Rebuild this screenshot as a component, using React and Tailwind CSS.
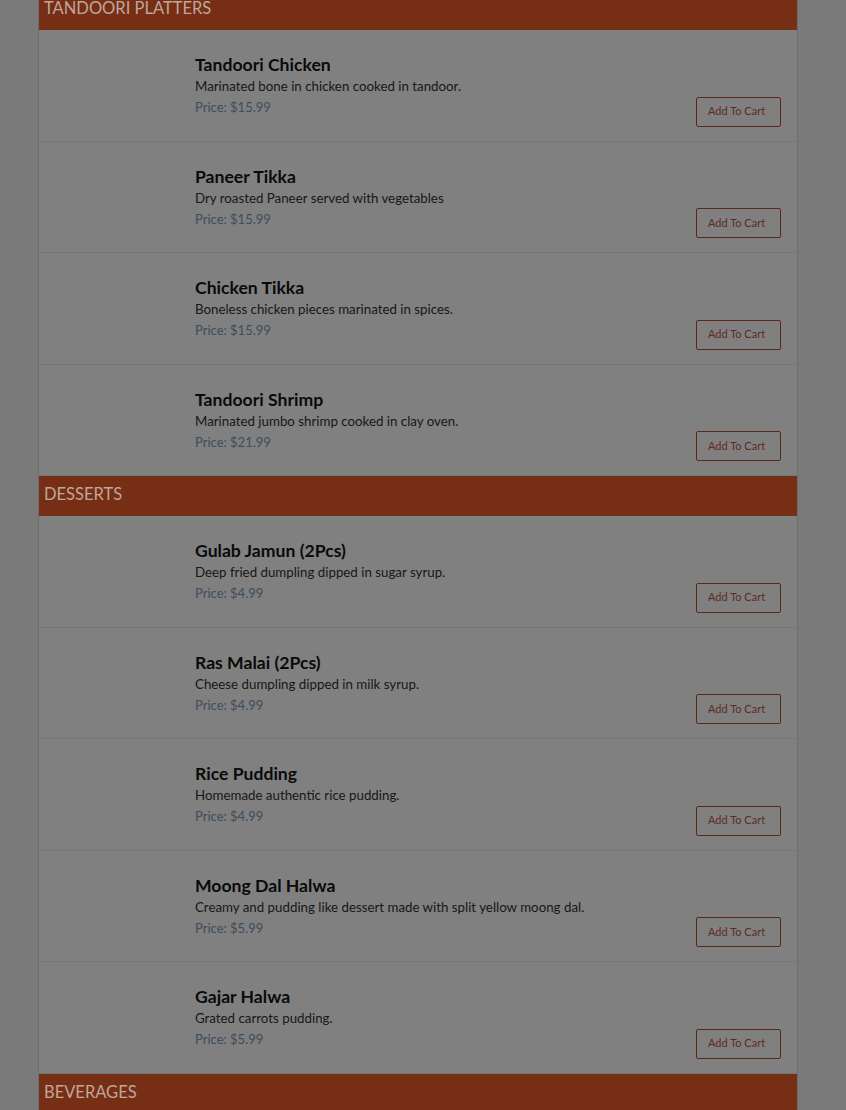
import React from 'react';

const sections = [
  {
    title: 'TANDOORI PLATTERS',
    items: [
      { name: 'Tandoori Chicken', desc: 'Marinated bone in chicken cooked in tandoor.', price: '$15.99' },
      { name: 'Paneer Tikka', desc: 'Dry roasted Paneer served with vegetables', price: '$15.99' },
      { name: 'Chicken Tikka', desc: 'Boneless chicken pieces marinated in spices.', price: '$15.99' },
      { name: 'Tandoori Shrimp', desc: 'Marinated jumbo shrimp cooked in clay oven.', price: '$21.99' },
    ],
  },
  {
    title: 'DESSERTS',
    items: [
      { name: 'Gulab Jamun (2Pcs)', desc: 'Deep fried dumpling dipped in sugar syrup.', price: '$4.99' },
      { name: 'Ras Malai (2Pcs)', desc: 'Cheese dumpling dipped in milk syrup.', price: '$4.99' },
      { name: 'Rice Pudding', desc: 'Homemade authentic rice pudding.', price: '$4.99' },
      { name: 'Moong Dal Halwa', desc: 'Creamy and pudding like dessert made with split yellow moong dal.', price: '$5.99' },
      { name: 'Gajar Halwa', desc: 'Grated carrots pudding.', price: '$5.99' },
    ],
  },
  { title: 'BEVERAGES', items: [] },
];

const MenuItem = ({ name, desc, price }) => (
  <div className="flex h-[111.5px] border-b border-[#777777]">
    {/* image slot, empty in the picture */}
    <div className="w-[156px] shrink-0" />
    <div className="flex-1 pt-[24px]">
      <h4 className="text-[17.6px] font-bold leading-[22px] text-[#0a0a0a]">{name}</h4>
      <p className="text-[13.3px] leading-[20px] text-[#171717]">{desc}</p>
      <p className="text-[13px] leading-[22px] text-[#3e4c5c]">Price: {price}</p>
    </div>
    <div className="flex items-end pb-[14px] pr-[16px]">
      <button
        type="button"
        className="h-[30px] w-[85px] rounded-[2px] border border-[#5c271b] pl-[11px] text-left text-[11px] text-[#5e2a1f]"
      >
        Add To Cart
      </button>
    </div>
  </div>
);

export default function App() {
  return (
    <div
      className="min-h-[1110px] overflow-hidden bg-[#7a7a7a]"
      style={{ fontFamily: 'Lato, "Noto Sans", sans-serif' }}
    >
      <div className="ml-[38px] -mt-[10px] w-[760px] border-x border-[#6e6e6e] bg-[#808080]">
        {sections.map((s) => (
          <div key={s.title}>
            <div className="flex h-[40px] items-center bg-[#762e15] px-[5px] pb-[3px] text-[16.5px] text-[#c0a69c]">
              {s.title}
            </div>
            {s.items.map((it) => (
              <MenuItem key={it.name} {...it} />
            ))}
          </div>
        ))}
      </div>
    </div>
  );
}
